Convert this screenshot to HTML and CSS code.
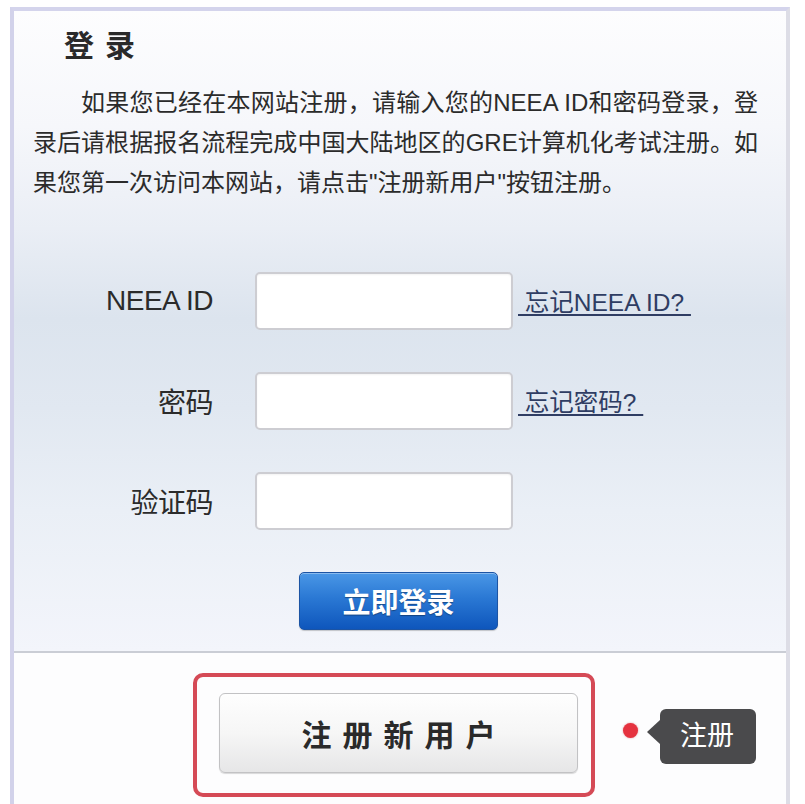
FILE: index.html
```html
<!DOCTYPE html>
<html lang="zh-CN">
<head>
<meta charset="utf-8">
<title>登录</title>
<link rel="stylesheet" href="styles.css">
</head>
<body>
<div class="frame">
  <section class="login">
    <h1 class="title">登录</h1>
    <p class="intro">如果您已经在本网站注册，请输入您的NEEA ID和密码登录，登录后请根据报名流程完成中国大陆地区的GRE计算机化考试注册。如果您第一次访问本网站，请点击"注册新用户"按钮注册。</p>
    <form class="form">
      <div class="row">
        <label class="label" for="nid">NEEA ID</label>
        <input class="field" id="nid" type="text">
        <a class="link" href="#">&nbsp;忘记NEEA ID?&nbsp;</a>
      </div>
      <div class="row">
        <label class="label" for="pwd">密码</label>
        <input class="field" id="pwd" type="password">
        <a class="link" href="#">&nbsp;忘记密码?&nbsp;</a>
      </div>
      <div class="row">
        <label class="label" for="cap">验证码</label>
        <input class="field" id="cap" type="text">
      </div>
      <button class="btn-login" type="button">立即登录</button>
    </form>
  </section>
  <section class="register">
    <div class="highlight">
      <button class="btn-register" type="button">注册新用户</button>
    </div>
    <span class="dot"></span>
    <span class="tip">注册</span>
  </section>
</div>
</body>
</html>
```

FILE: styles.css
```css
* { box-sizing: border-box; }
html, body { margin: 0; padding: 0; background: #ffffff; }
body {
  font-family: "Liberation Sans", "Noto Sans CJK SC", sans-serif;
  color: #2b2b2b;
  overflow: hidden;
  height: 804px;
}
.frame {
  margin: 7px 0 0 10px;
  width: 780px;
  border-top: 4px solid #d4d4ec;
  border-left: 4px solid #d2d2ea;
  border-right: 4px solid #dddde6;
}
.login {
  padding: 17px 0 21px 0;
  background: linear-gradient(to bottom, #fdfdfe 0%, #f6f7fb 18%, #eaeef5 34%, #dce4ee 48%, #e1e8f1 62%, #eaeff6 78%, #f3f5fb 100%);
}
.title {
  margin: 0 0 0 50px;
  font-size: 30px;
  line-height: 36px;
  font-weight: bold;
  letter-spacing: 11px;
  color: #2a2a2a;
}
.intro {
  margin: 19px 0 0 19px;
  width: 725px;
  font-size: 24px;
  line-height: 40px;
  text-indent: 48px;
  text-align: justify;
  color: #2b2b2b;
}
.form {
  margin: 69px 0 0 0;
  display: flex;
  flex-direction: column;
  gap: 42px;
}
.row {
  display: flex;
  align-items: center;
  height: 58px;
}
.label {
  width: 199px;
  text-align: right;
  font-size: 28px;
  letter-spacing: -0.5px;
  color: #2b2b2b;
}
.field {
  margin-left: 42px;
  width: 258px;
  height: 58px;
  border: 2px solid #cdcdd2;
  border-radius: 5px;
  background: #ffffff;
  box-shadow: inset 0 1px 2px rgba(0,0,0,0.05);
  outline: none;
  font-size: 20px;
}
.link {
  margin-left: 5px;
  margin-top: -2px;
  font-size: 24.5px;
  color: #2f3d63;
  text-decoration: underline;
  text-decoration-thickness: 1.5px;
  text-underline-offset: 3px;
}
.btn-login {
  align-self: flex-start;
  margin-left: 285px;
  width: 199px;
  height: 58px;
  border: 1px solid #1c54a4;
  border-radius: 5px;
  background: linear-gradient(to bottom, #4a97e6 0%, #2a78d4 45%, #0e56bc 100%);
  box-shadow: inset 0 1px 0 rgba(255,255,255,0.35), 0 1px 1px rgba(0,0,0,0.2);
  color: #ffffff;
  font-family: "Liberation Sans", "Noto Sans CJK SC", sans-serif;
  font-size: 28px;
  font-weight: bold;
  text-shadow: 0 1px 1px rgba(0,0,0,0.35);
  padding: 0;
}
.register {
  border-top: 2px solid #cacdd5;
  background: #fdfdfe;
  height: 160px;
  padding: 20px 0 0 179px;
  display: flex;
  align-items: flex-start;
}
.highlight {
  border: 4px solid #d54a56;
  border-radius: 10px;
  padding: 16px 13px 20px 22px;
  width: 402px;
  height: 124px;
}
.btn-register {
  width: 359px;
  height: 80px;
  border: 1px solid #c2c2c4;
  border-radius: 6px;
  background: linear-gradient(to bottom, #fefefe 0%, #f6f6f6 50%, #e6e6e7 100%);
  box-shadow: 0 1px 1px rgba(0,0,0,0.15);
  font-family: "Liberation Sans", "Noto Sans CJK SC", sans-serif;
  font-size: 30px;
  font-weight: bold;
  letter-spacing: 11px;
  text-indent: 11px;
  color: #2a2a2a;
  padding: 0;
}
.dot {
  margin: 50px 0 0 28px;
  width: 15px;
  height: 15px;
  border-radius: 50%;
  background: #e5323f;
  box-shadow: 0 0 2px rgba(200,30,40,0.5);
  flex: none;
}
.tip {
  position: relative;
  margin: 36px 0 0 22px;
  width: 96px;
  height: 55px;
  border-radius: 6px;
  background: #4a4a4c;
  color: #ffffff;
  font-size: 27px;
  line-height: 55px;
  padding-left: 20px;
  flex: none;
}
.tip::before {
  content: "";
  position: absolute;
  left: -13px;
  top: 11px;
  border-right: 13px solid #4a4a4c;
  border-top: 12px solid transparent;
  border-bottom: 12px solid transparent;
}
```
